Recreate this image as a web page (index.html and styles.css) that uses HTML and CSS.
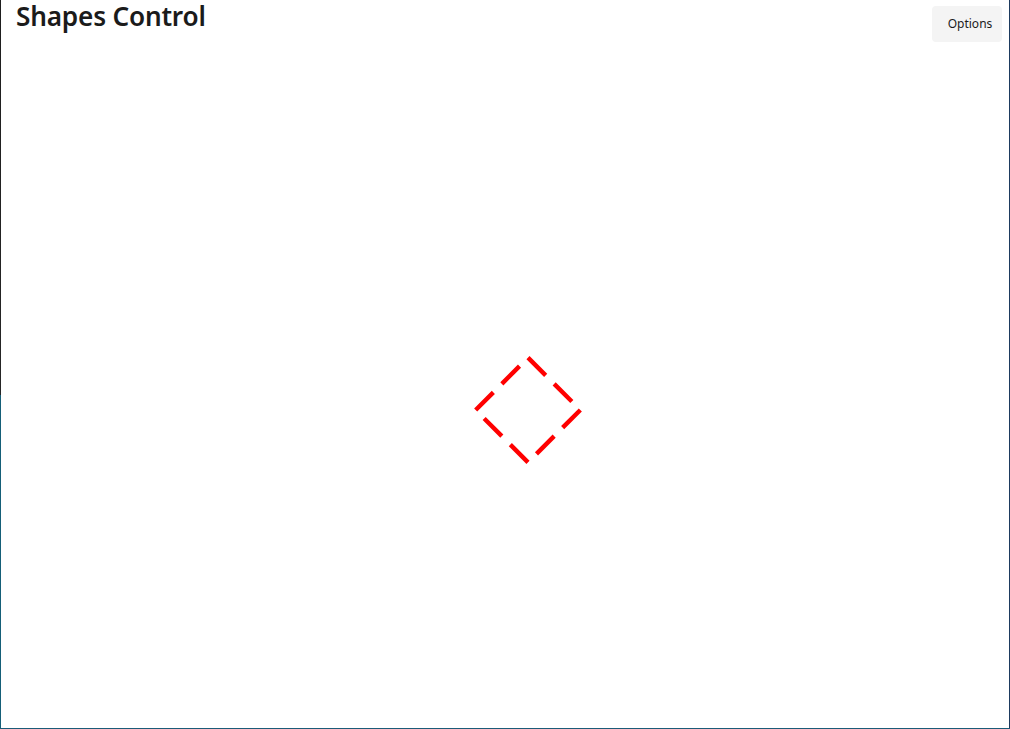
FILE: index.html
```html
<!DOCTYPE html>
<html>
<head>
<meta charset="utf-8">
<link rel="stylesheet" href="styles.css">
</head>
<body>
<div class="frame">
  <div class="desk-edge"></div>
  <div class="window">
    <header class="header">
      <h1 class="title">Shapes Control</h1>
      <button class="options">Options</button>
    </header>
    <div class="canvas">
      <svg class="diamond" width="120" height="120" viewBox="0 0 120 120">
        <rect x="23" y="23" width="74" height="74" fill="none" stroke="#ff0000" stroke-width="4.4" stroke-dasharray="25 12" transform="rotate(45 60 60)"/>
      </svg>
    </div>
  </div>
</div>
</body>
</html>
```
FILE: styles.css
```css
html, body {
  margin: 0;
  padding: 0;
  width: 1010px;
  height: 729px;
  overflow: hidden;
  background: #ffffff;
}
.frame {
  display: flex;
  width: 1010px;
  height: 729px;
  box-sizing: border-box;
  border-bottom: 1px solid #1b5b78;
}
.desk-edge {
  width: 1px;
  flex: none;
  background: linear-gradient(to bottom, #1e1e1e 0, #262626 395px, #155f78 395px, #155f78 100%);
}
.window {
  flex: 1;
  position: relative;
  background: #ffffff;
  border-right: 1px solid #1d3a5e;
  display: flex;
  flex-direction: column;
}
.header {
  display: flex;
  justify-content: space-between;
  align-items: flex-start;
  padding: 0 7px 0 15px;
}
.title {
  margin: 0;
  font-family: "Noto Sans", "Open Sans", sans-serif;
  font-weight: 600;
  font-size: 26.2px;
  line-height: 32px;
  color: #1b1b1b;
  letter-spacing: -0.2px;
}
.options {
  margin-top: 6px;
  width: 70px;
  height: 36px;
  border: none;
  border-radius: 4px;
  background: #f4f4f4;
  font-family: "Noto Sans", "Open Sans", sans-serif;
  font-size: 12px;
  color: #1b1b1b;
  padding: 0 2px 2px 8px;
}
.canvas {
  flex: 1;
  position: relative;
}
.diamond {
  position: absolute;
  left: 467px;
  top: 308px;
}
```
